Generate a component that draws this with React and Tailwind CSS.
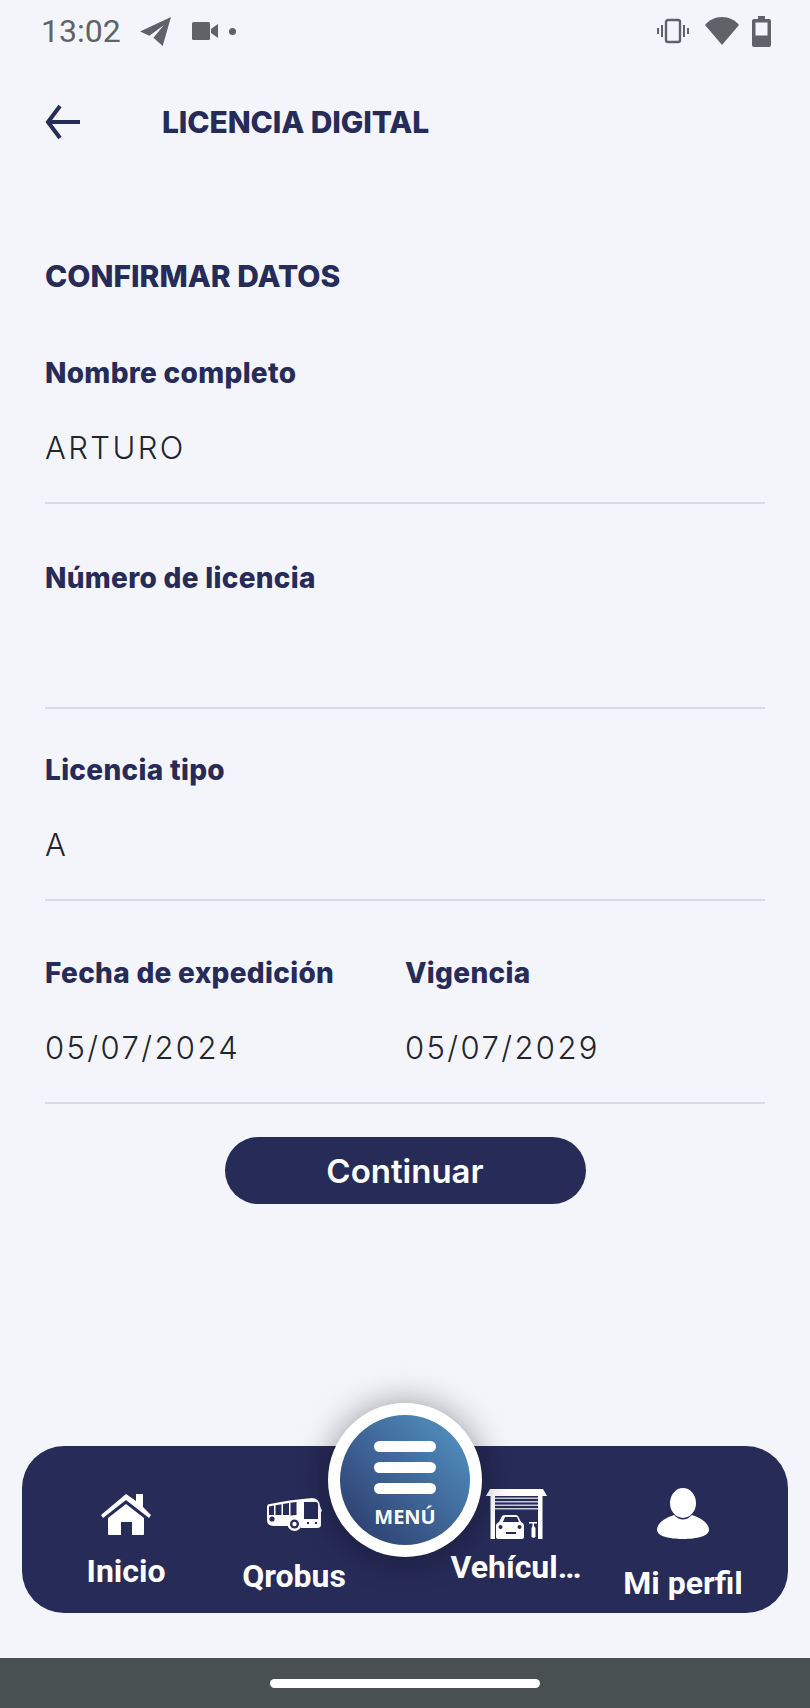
import React from 'react';

const navy = '#262b58';

const StatusBar = () => (
  <div className="h-[62px] flex items-center justify-between pl-[41px] pr-[39px] text-[#5f6368]">
    <div className="flex items-center">
      <span className="font-['Roboto'] text-[32px] leading-none">13:02</span>
      <svg className="ml-[18px] w-[33px] h-[31px]" viewBox="0 0 32 30" fill="currentColor"><path d="M31 1 1 15l9 4 14-10-10 12 9 8z" /></svg>
      <svg className="ml-[20px] w-[27px] h-[20px]" viewBox="0 0 27 20" fill="currentColor"><rect x="0" y="1" width="18" height="18" rx="1.500" /><path d="m19 8 7-5v14l-7-5z" /></svg>
      <div className="ml-[10px] w-[7px] h-[7px] rounded-full bg-current"></div>
    </div>
    <div className="flex items-center">
      <svg className="w-[32px] h-[26px]" viewBox="0 0 32 26" fill="none" stroke="currentColor" strokeWidth="2"><rect x="9" y="2" width="14" height="22" rx="2" strokeWidth="2.400" /><path d="M5 7v12M1 10v6M27 7v12M31 10v6" /></svg>
      <svg className="ml-[16px] w-[34px] h-[30px]" viewBox="0 0 34 30" fill="currentColor"><path d="M17 29 0 9C4 4 10 1 17 1s13 3 17 8z" /></svg>
      <svg className="ml-[13px] w-[19px] h-[31px]" viewBox="0 0 19 31" fill="currentColor"><path d="M6 0h7v3h4q2 0 2 2v24q0 2-2 2H2q-2 0-2-2V5q0-2 2-2h4z" /><rect x="3.500" y="6.500" width="12" height="13" fill="#f3f5fb" /></svg>
    </div>
  </div>
);

const Field = ({ label, value, className = '' }) => (
  <div className={className}>
    <div className="text-[28px] leading-[34px] font-extrabold tracking-[0.3px]" style={{ color: navy }}>{label}</div>
    <div className="mt-[40px] h-[36px] text-[31px] leading-[36px] font-light tracking-[2.4px] text-[#23252c]">{value}</div>
  </div>
);

const Divider = () => <div className="h-[2px] bg-[#d9dbe3]"></div>;

const HomeIcon = () => (
  <svg className="w-[50px] h-[41px]" viewBox="0 0 50 41" fill="#fff">
    <path d="M25 0 35 7V0h7v13l8 8-2 3L25 6 2 24l-2-3z" />
    <path d="M7 24 25 10l18 14v16q0 1-1 1H31V28H20v13H8q-1 0-1-1z" />
  </svg>
);

const BusIcon = () => (
  <svg className="w-[56px] h-[33px]" viewBox="0 0 56 33" fill="#fff">
    <path d="M1 9Q1 6 4 6 22 2 46 0q7 0 8 8l2 5-1 1v13q0 3-4 3H35a7 7 0 0 0-13-2H8q-7 0-7-6z" />
    <path d="M3 8.500l5-1V17H3zM9.500 7.200l6-1V17h-6zM17 6l6-1v12h-6zM24.500 4.800l6-.8v13l-6 .6zM38 4h12q2 0 2 3v14H38z" fill={navy} />
    <circle cx="28.500" cy="26" r="7" />
    <circle cx="28.500" cy="26" r="4.500" fill={navy} />
    <circle cx="28.500" cy="26" r="2.200" />
    <circle cx="6" cy="21" r="2.600" fill={navy} />
    <path d="M41 24h2v2h-2zM49 24h2v2h-2z" fill={navy} />
  </svg>
);

const GarageIcon = () => (
  <svg className="w-[61px] h-[50px]" viewBox="0 0 61 50" fill="#fff">
    <path d="M4 0h53l4 7H0z" />
    <path d="M4.500 7H9v43H4.500zM52 7h4.500v43H52z" />
    <path d="M9 8.500h43v1.500H9zM9 12h43v1.500H9zM9 15.500h43V17H9zM9 19h43v1.500H9z" fillOpacity=".75" />
    <path d="M10 37q0-3 3-4l3-6q1-1 3-1h10q2 0 3 1l3 6q3 1 3 4v11q0 2-2 2H12q-2 0-2-2z" />
    <path d="M17 33l2-5h12l2 5z" fill={navy} />
    <circle cx="14.500" cy="38" r="2" fill={navy} />
    <circle cx="33.500" cy="38" r="2" fill={navy} />
    <path d="M20 43h10v2H20z" fill={navy} />
    <path d="M43 33h8v1.500h-3V37l1.500 2v9l-2 1-2-1v-9l1-2v-2.500H43z" />
  </svg>
);

const UserIcon = () => (
  <svg className="w-[52px] h-[51px]" viewBox="0 0 52 51" fill="#fff">
    <ellipse cx="26" cy="15" rx="13" ry="15" />
    <path d="M17 27q9 9 18 0c9 3 17 8 17 15 0 6-12 9-26 9S0 48 0 42c0-7 8-12 17-15z" />
  </svg>
);

const NavItem = ({ icon, label, labelClass }) => (
  <div className="flex flex-col items-center">
    {icon}
    <div className={`font-['Roboto'] font-bold text-white whitespace-nowrap text-[32px] leading-[36px] ${labelClass}`}>{label}</div>
  </div>
);

const BottomNav = () => (
  <div className="relative mx-[22px] h-[167px] rounded-[42px] flex pl-[24px] pr-[18px]" style={{ backgroundColor: navy }}>
    <div className="w-[160px] pt-[48px]"><NavItem icon={<HomeIcon />} label="Inicio" labelClass="mt-[18px]" /></div>
    <div className="w-[176px] pt-[52px]"><NavItem icon={<BusIcon />} label="Qrobus" labelClass="mt-[27px]" /></div>
    <div className="flex-1"></div>
    <div className="w-[160px] pt-[43px]"><NavItem icon={<GarageIcon />} label="Vehícul…" labelClass="mt-[10px]" /></div>
    <div className="w-[174px] pt-[42px]"><NavItem icon={<UserIcon />} label="Mi perfil" labelClass="mt-[26px]" /></div>
    {/* boton central, sobresale de la barra */}
    <div className="absolute left-[306px] top-[-43px] w-[154px] h-[154px] rounded-full bg-white p-[12px] shadow-[0_0_34px_rgba(0,0,0,0.38)]">
      <div className="w-full h-full rounded-full flex flex-col items-center pt-[26px] bg-gradient-to-tr from-[#2a3768] to-[#5398c8]">
        <div className="w-[62px] h-[11px] rounded-full bg-white"></div>
        <div className="mt-[10px] w-[62px] h-[11px] rounded-full bg-white"></div>
        <div className="mt-[10px] w-[62px] h-[11px] rounded-full bg-white"></div>
        <div className="mt-[11px] text-white font-['Open_Sans'] font-bold text-[20px] leading-[24px]">MENÚ</div>
      </div>
    </div>
  </div>
);

export default function App() {
  return (
    <div className="w-[810px] h-[1708px] flex flex-col bg-[#f3f5fb] font-['Inter',sans-serif]">
      <StatusBar />

      <div className="mt-[20px] pl-[45px] h-[80px] flex items-center">
        <svg className="w-[36px] h-[36px]" viewBox="0 0 36 36" fill="none" stroke={navy} strokeWidth="4"><path d="M35 18H3M15 2 3 18l12 16" /></svg>
        <h1 className="ml-[81px] text-[30px] font-extrabold tracking-[-0.1px]" style={{ color: navy }}>LICENCIA DIGITAL</h1>
      </div>

      <div className="px-[45px] flex-1 flex flex-col">
        <h2 className="mt-[96px] text-[30px] leading-[36px] font-extrabold" style={{ color: navy }}>CONFIRMAR DATOS</h2>

        <Field className="mt-[62px]" label="Nombre completo" value="ARTURO" />
        <div className="mt-[36px]"><Divider /></div>

        <Field className="mt-[57px]" label="Número de licencia" value="" />
        <div className="mt-[36px]"><Divider /></div>

        <Field className="mt-[44px]" label="Licencia tipo" value="A" />
        <div className="mt-[36px]"><Divider /></div>

        <div className="mt-[55px] flex">
          <Field className="w-[360px]" label="Fecha de expedición" value="05/07/2024" />
          <Field label="Vigencia" value="05/07/2029" />
        </div>
        <div className="mt-[36px]"><Divider /></div>

        <button className="mt-[33px] self-center w-[361px] h-[67px] pt-[2px] rounded-full text-white text-[33px] font-semibold" style={{ backgroundColor: navy }}>Continuar</button>
      </div>

      <BottomNav />

      <div className="mt-[45px] h-[50px] bg-[#495052] flex items-center justify-center">
        <div className="w-[270px] h-[9px] rounded-full bg-white"></div>
      </div>
    </div>
  );
}
